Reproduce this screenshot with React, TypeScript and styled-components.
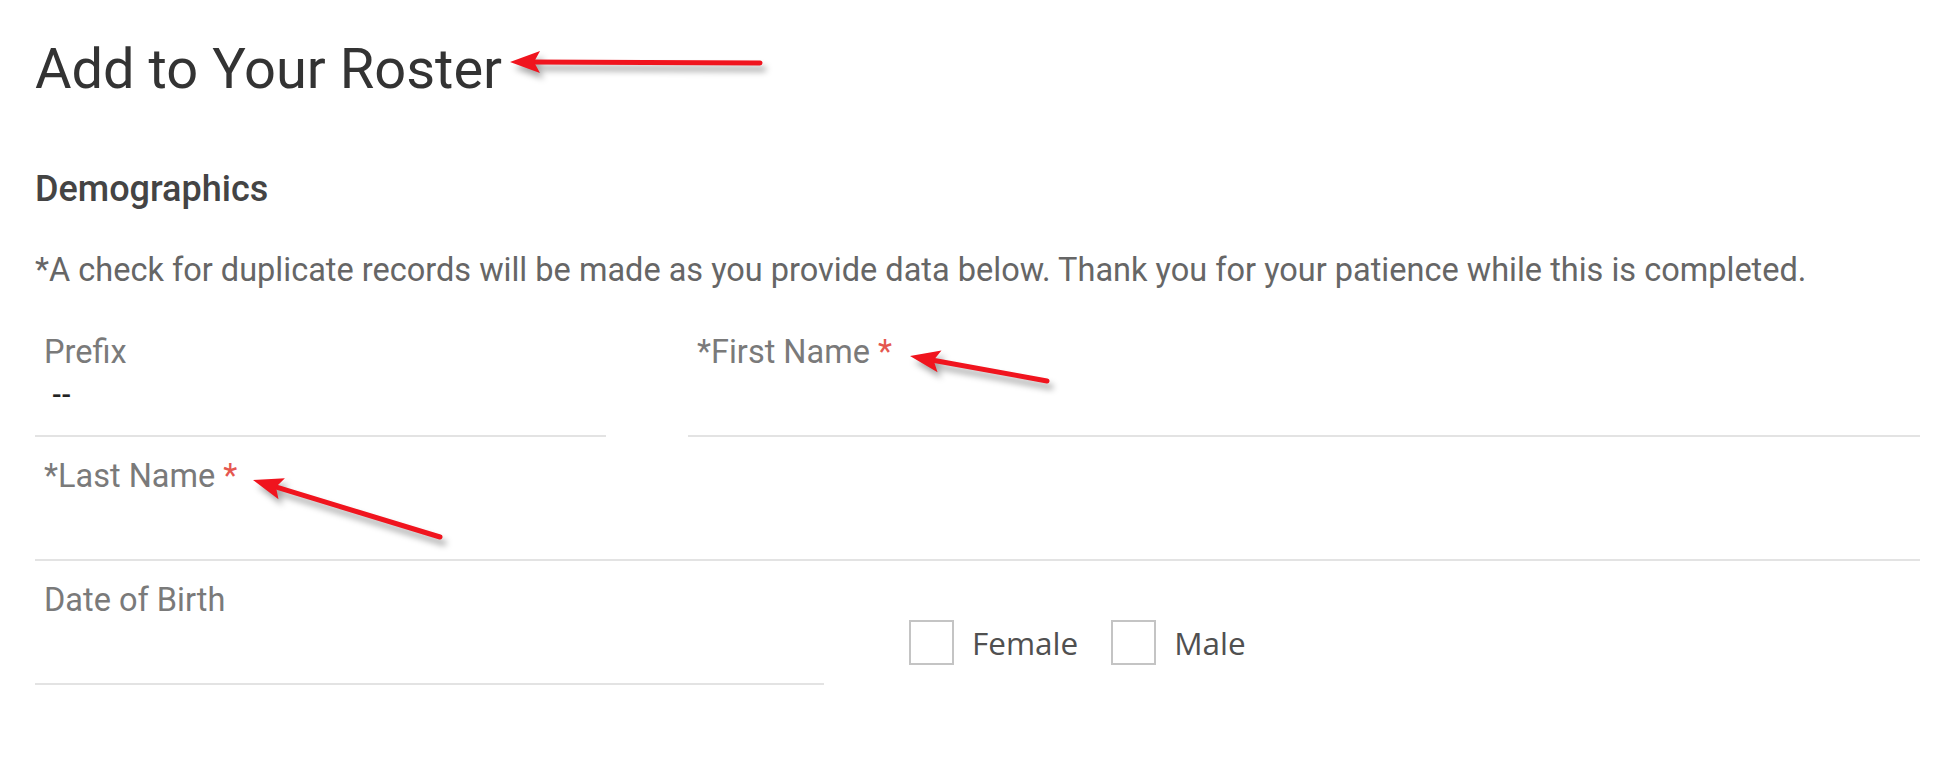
import React from 'react';
import styled, { createGlobalStyle } from 'styled-components';

const GlobalStyle = createGlobalStyle`
  html, body {
    margin: 0;
    padding: 0;
    background: #ffffff;
    font-family: Roboto, "Liberation Sans", Arial, sans-serif;
  }
`;

type ArrowProps = {
  dx: number;
  dy: number;
  left: number;
  top: number;
};

const PAD = 16;

// red annotation arrow, tip at (left, top) of the anchor's right edge
const Arrow = ({ dx, dy, left, top }: ArrowProps) => {
  const len = Math.sqrt(dx * dx + dy * dy);
  const ux = dx / len;
  const uy = dy / len;
  const nx = -uy;
  const ny = ux;
  const headLen = 30;
  const headW = 11;
  const tx = PAD;
  const ty = PAD;
  const bx = tx + ux * headLen;
  const by = ty + uy * headLen;
  const head = [
    `${tx},${ty}`,
    `${bx + nx * headW},${by + ny * headW}`,
    `${bx - ux * 6},${by - uy * 6}`,
    `${bx - nx * headW},${by - ny * headW}`,
  ].join(' ');

  return (
    <ArrowSvg
      width={dx + PAD * 2}
      height={dy + PAD * 2}
      style={{ left: `calc(100% + ${left - PAD}px)`, top: top - PAD }}
    >
      <line
        x1={bx - ux * 8}
        y1={by - uy * 8}
        x2={tx + dx}
        y2={ty + dy}
        stroke="#f0141e"
        strokeWidth={5}
        strokeLinecap="round"
      />
      <polygon points={head} fill="#f0141e" />
    </ArrowSvg>
  );
};

const App = () => {
  return (
    <>
      <GlobalStyle />
      <Page>
        <Title>
          Add to Your Roster
          <Arrow dx={250} dy={1} left={8} top={26} />
        </Title>

        <SectionTitle>Demographics</SectionTitle>

        <Notice>
          *A check for duplicate records will be made as you provide data below. Thank you for
          your patience while this is completed.
        </Notice>

        <Row>
          <Field width="571px">
            <Label>Prefix</Label>
            <InputArea>
              <Value>--</Value>
            </InputArea>
          </Field>
          <Field grow gapLeft="82px">
            <Label>
              *First Name <Req>*</Req>
              <Arrow dx={137} dy={25} left={18} top={22} />
            </Label>
            <InputArea />
          </Field>
        </Row>

        <Row>
          <Field grow>
            <Label>
              *Last Name <Req>*</Req>
              <Arrow dx={187} dy={57} left={16} top={22} />
            </Label>
            <InputArea />
          </Field>
        </Row>

        <Row>
          <Field width="789px">
            <Label>Date of Birth</Label>
            <InputArea />
          </Field>
          <Options>
            <Option>
              <Box />
              <OptionText>Female</OptionText>
            </Option>
            <Option>
              <Box />
              <OptionText>Male</OptionText>
            </Option>
          </Options>
        </Row>
      </Page>
    </>
  );
};

export default App;

const Page = styled.div`
  padding: 36px 32px 40px 35px;
`;

const Title = styled.h1`
  position: relative;
  display: inline-block;
  margin: 0;
  font-size: 56px;
  line-height: 66px;
  font-weight: 400;
  color: #333;
`;

const ArrowSvg = styled.svg`
  position: absolute;
  overflow: visible;
  filter: drop-shadow(4px 6px 3px rgba(0, 0, 0, 0.35));
  pointer-events: none;
`;

const SectionTitle = styled.h2`
  margin: 66px 0 0;
  font-size: 36px;
  line-height: 42px;
  font-weight: 500;
  color: #444;
`;

const Notice = styled.p`
  margin: 41px 0 0;
  font-size: 32.5px;
  line-height: 38px;
  color: #666;
  white-space: nowrap;
`;

const Row = styled.div`
  display: flex;
  align-items: flex-start;
  margin-top: 21px;

  &:first-of-type {
    margin-top: 45px;
  }
`;

const Field = styled.div<{ width?: string; grow?: boolean; gapLeft?: string }>`
  width: ${(p) => p.width || 'auto'};
  flex: ${(p) => (p.grow ? '1' : '0 0 auto')};
  margin-left: ${(p) => p.gapLeft || '0'};
  border-bottom: 2px solid #e3e3e3;
`;

const Label = styled.div`
  position: relative;
  display: inline-block;
  padding-left: 9px;
  font-size: 32.5px;
  line-height: 36px;
  color: #7a7a7a;
`;

const Req = styled.span`
  color: #e5574f;
`;

const InputArea = styled.div`
  height: 65px;
  padding: 7px 0 0 17px;
  box-sizing: border-box;
`;

const Value = styled.div`
  font-size: 28px;
  line-height: 36px;
  font-weight: 500;
  color: #222;
`;

const Options = styled.div`
  display: flex;
  align-items: center;
  margin: 38px 0 0 85px;
`;

const Option = styled.label`
  display: flex;
  align-items: center;
  margin-right: 33px;
`;

const Box = styled.span`
  width: 41px;
  height: 41px;
  border: 2px solid #c4c4c4;
  background: #fff;
`;

const OptionText = styled.span`
  margin-left: 18px;
  font-family: "Open Sans", "Noto Sans", sans-serif;
  font-size: 31.5px;
  color: #505050;
`;
